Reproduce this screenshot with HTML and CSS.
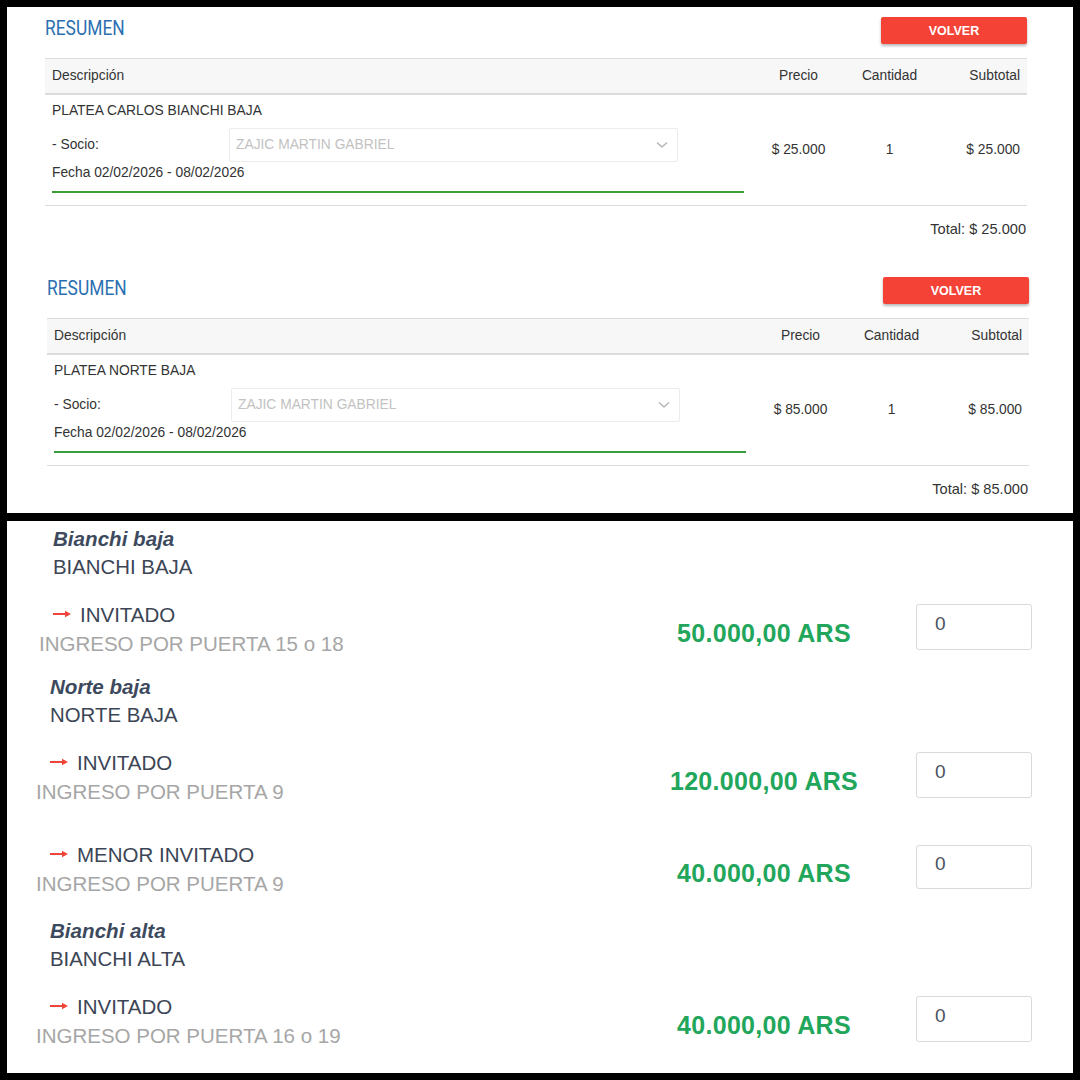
FILE: index.html
```html
<!DOCTYPE html>
<html lang="es">
<head>
<meta charset="utf-8">
<title>Resumen</title>
<link rel="stylesheet" href="styles.css">
</head>
<body>
<div class="frame">
  <div class="panel panel-top">
    <section class="resumen">
      <div class="sec-head">
        <h2 class="sec-title">RESUMEN</h2>
        <button class="btn-volver">VOLVER</button>
      </div>
      <table class="tabla">
        <thead>
          <tr>
            <th class="c-desc">Descripción</th>
            <th class="c-precio">Precio</th>
            <th class="c-cant">Cantidad</th>
            <th class="c-sub">Subtotal</th>
          </tr>
        </thead>
        <tbody>
          <tr>
            <td class="c-desc">
              <div class="item-name">PLATEA CARLOS BIANCHI BAJA</div>
              <div class="socio-row">
                <span class="socio-label">- Socio:</span>
                <div class="select">
                  <span>ZAJIC MARTIN GABRIEL</span>
                  <svg class="chev" width="12" height="8" viewBox="0 0 12 8"><polyline points="1,1.5 6,6 11,1.5" fill="none" stroke="#b8b8b8" stroke-width="1.6"/></svg>
                </div>
              </div>
              <div class="fecha">Fecha 02/02/2026 - 08/02/2026</div>
              <div class="green-line"></div>
            </td>
            <td class="c-precio">$ 25.000</td>
            <td class="c-cant">1</td>
            <td class="c-sub">$ 25.000</td>
          </tr>
        </tbody>
      </table>
      <div class="total">Total: $ 25.000</div>
    </section>

    <section class="resumen resumen-shift">
      <div class="sec-head">
        <h2 class="sec-title">RESUMEN</h2>
        <button class="btn-volver">VOLVER</button>
      </div>
      <table class="tabla">
        <thead>
          <tr>
            <th class="c-desc">Descripción</th>
            <th class="c-precio">Precio</th>
            <th class="c-cant">Cantidad</th>
            <th class="c-sub">Subtotal</th>
          </tr>
        </thead>
        <tbody>
          <tr>
            <td class="c-desc">
              <div class="item-name">PLATEA NORTE BAJA</div>
              <div class="socio-row">
                <span class="socio-label">- Socio:</span>
                <div class="select">
                  <span>ZAJIC MARTIN GABRIEL</span>
                  <svg class="chev" width="12" height="8" viewBox="0 0 12 8"><polyline points="1,1.5 6,6 11,1.5" fill="none" stroke="#b8b8b8" stroke-width="1.6"/></svg>
                </div>
              </div>
              <div class="fecha">Fecha 02/02/2026 - 08/02/2026</div>
              <div class="green-line"></div>
            </td>
            <td class="c-precio">$ 85.000</td>
            <td class="c-cant">1</td>
            <td class="c-sub">$ 85.000</td>
          </tr>
        </tbody>
      </table>
      <div class="total">Total: $ 85.000</div>
    </section>
  </div>

  <div class="panel panel-bottom">
    <div class="group group-first">
      <div class="g-title">Bianchi baja</div>
      <div class="g-sub">BIANCHI BAJA</div>
      <div class="tick">
        <div class="tick-text">
          <div class="tick-name"><svg class="arrow" width="18" height="8" viewBox="0 0 18 8"><line x1="0" y1="4" x2="13" y2="4" stroke="#f0443a" stroke-width="2"/><polygon points="12,0.8 18,4 12,7.2" fill="#f0443a"/></svg>INVITADO</div>
          <div class="tick-gate">INGRESO POR PUERTA 15 o 18</div>
        </div>
        <div class="tick-price">50.000,00 ARS</div>
        <input class="qty" type="text" value="0">
      </div>
    </div>

    <div class="group">
      <div class="g-title">Norte baja</div>
      <div class="g-sub">NORTE BAJA</div>
      <div class="tick">
        <div class="tick-text">
          <div class="tick-name"><svg class="arrow" width="18" height="8" viewBox="0 0 18 8"><line x1="0" y1="4" x2="13" y2="4" stroke="#f0443a" stroke-width="2"/><polygon points="12,0.8 18,4 12,7.2" fill="#f0443a"/></svg>INVITADO</div>
          <div class="tick-gate">INGRESO POR PUERTA 9</div>
        </div>
        <div class="tick-price">120.000,00 ARS</div>
        <input class="qty" type="text" value="0">
      </div>
      <div class="tick tick-next">
        <div class="tick-text">
          <div class="tick-name"><svg class="arrow" width="18" height="8" viewBox="0 0 18 8"><line x1="0" y1="4" x2="13" y2="4" stroke="#f0443a" stroke-width="2"/><polygon points="12,0.8 18,4 12,7.2" fill="#f0443a"/></svg>MENOR INVITADO</div>
          <div class="tick-gate">INGRESO POR PUERTA 9</div>
        </div>
        <div class="tick-price">40.000,00 ARS</div>
        <input class="qty qty-short" type="text" value="0">
      </div>
    </div>

    <div class="group group-last">
      <div class="g-title">Bianchi alta</div>
      <div class="g-sub">BIANCHI ALTA</div>
      <div class="tick">
        <div class="tick-text">
          <div class="tick-name"><svg class="arrow" width="18" height="8" viewBox="0 0 18 8"><line x1="0" y1="4" x2="13" y2="4" stroke="#f0443a" stroke-width="2"/><polygon points="12,0.8 18,4 12,7.2" fill="#f0443a"/></svg>INVITADO</div>
          <div class="tick-gate">INGRESO POR PUERTA 16 o 19</div>
        </div>
        <div class="tick-price">40.000,00 ARS</div>
        <input class="qty" type="text" value="0">
      </div>
    </div>
  </div>
</div>
</body>
</html>
```

FILE: styles.css
```css
* { box-sizing: border-box; }

html, body {
  margin: 0;
  padding: 0;
  background: #000;
}

body {
  width: 1080px;
  height: 1080px;
  overflow: hidden;
  font-family: "Liberation Sans", Arial, sans-serif;
}

.frame {
  display: flex;
  flex-direction: column;
  gap: 8px;
  padding: 7px;
  height: 1080px;
}

.panel {
  background: #fff;
}

/* ---------- top panel ---------- */
.panel-top {
  height: 506px;
  padding: 0 46px 0 38px;
  color: #333;
}

.resumen {
  height: 260px;
}

.resumen-shift {
  margin-left: 2px;
  margin-right: -2px;
}

.sec-head {
  display: flex;
  justify-content: space-between;
  align-items: flex-start;
  padding-top: 9px;
}

.sec-title {
  margin: 0;
  display: inline-block;
  font-family: Roboto, "Liberation Sans", sans-serif;
  font-weight: 400;
  font-size: 20px;
  line-height: 24px;
  color: #2c6fb1;
  transform: scaleX(0.87);
  transform-origin: left center;
}

.btn-volver {
  margin-top: 1px;
  width: 146px;
  height: 27px;
  border: none;
  border-radius: 2px;
  background: #f44336;
  color: #fff;
  font-family: "Liberation Sans", Arial, sans-serif;
  font-weight: 700;
  font-size: 12.5px;
  padding: 0;
  box-shadow: 0 2px 3px rgba(0, 0, 0, 0.28);
}

.tabla {
  margin-top: 14px;
  width: 100%;
  border-collapse: collapse;
  table-layout: fixed;
  font-size: 13.8px;
}

.tabla th {
  height: 35px;
  padding: 0 7px;
  font-weight: 400;
  background: #f7f7f7;
  border-top: 1px solid #dcdcdc;
  border-bottom: 2px solid #dcdcdc;
  vertical-align: middle;
}

.tabla td {
  padding: 0 7px;
  border-bottom: 1px solid #dcdcdc;
  vertical-align: middle;
}

.c-desc { width: 706px; text-align: left; }
.c-precio { width: 95px; text-align: center; }
.c-cant { width: 87px; text-align: center; }
.c-sub { text-align: right; }

.tabla td.c-desc {
  padding: 7px 7px 12px 7px;
}

.item-name {
  line-height: 18px;
}

.socio-row {
  display: flex;
  align-items: center;
  margin-top: 8px;
}

.socio-label {
  width: 177px;
  flex: none;
}

.select {
  width: 449px;
  height: 34px;
  border: 1px solid #ececec;
  border-radius: 2px;
  display: flex;
  align-items: center;
  justify-content: space-between;
  padding: 0 9px 0 6px;
  color: #c2c2c2;
}

.chev { display: block; }

.fecha {
  margin-top: 2px;
  line-height: 18px;
}

.green-line {
  margin-top: 9px;
  height: 2px;
  background: #3a9f3a;
}

.total {
  margin-top: 13px;
  text-align: right;
  font-size: 14.6px;
  line-height: 20px;
  padding-right: 1px;
}

/* ---------- bottom panel ---------- */
.panel-bottom {
  height: 552px;
  padding: 2.5px 41px 0 43px;
  color: #3c4556;
}

.group + .group {
  margin-top: 14px;
}

.group + .group-last {
  margin-top: 18px;
}

.group-first {
  padding-left: 3px;
}

.g-title {
  font-weight: 700;
  font-style: italic;
  font-size: 20.6px;
  line-height: 29px;
  color: #3d4a5e;
}

.g-sub {
  font-size: 20.4px;
  line-height: 29px;
}

.tick {
  display: grid;
  grid-template-columns: 1fr 230px 116px;
  column-gap: 37px;
  align-items: center;
  margin-top: 18px;
}

.tick-next {
  margin-top: 34px;
}

.tick-text {
  font-size: 20.5px;
  line-height: 29px;
}

.tick-name {
  display: flex;
  align-items: center;
}

.arrow {
  display: block;
  margin-right: 9px;
  flex: none;
}

.tick-gate {
  margin-left: -14px;
  color: #a6a6a6;
  white-space: nowrap;
}

.tick-price {
  text-align: center;
  padding-top: 9px;
  font-weight: 700;
  font-size: 25px;
  color: #22a65b;
  letter-spacing: 0.3px;
}

.qty {
  width: 116px;
  height: 46px;
  margin-bottom: 3px;
  border: 1px solid #dadada;
  border-radius: 3px;
  padding: 0 0 6px 18px;
  font-family: "Liberation Sans", Arial, sans-serif;
  font-size: 19px;
  color: #4a5060;
  background: #fff;
  outline: none;
}

.qty-short {
  height: 44px;
}
```
